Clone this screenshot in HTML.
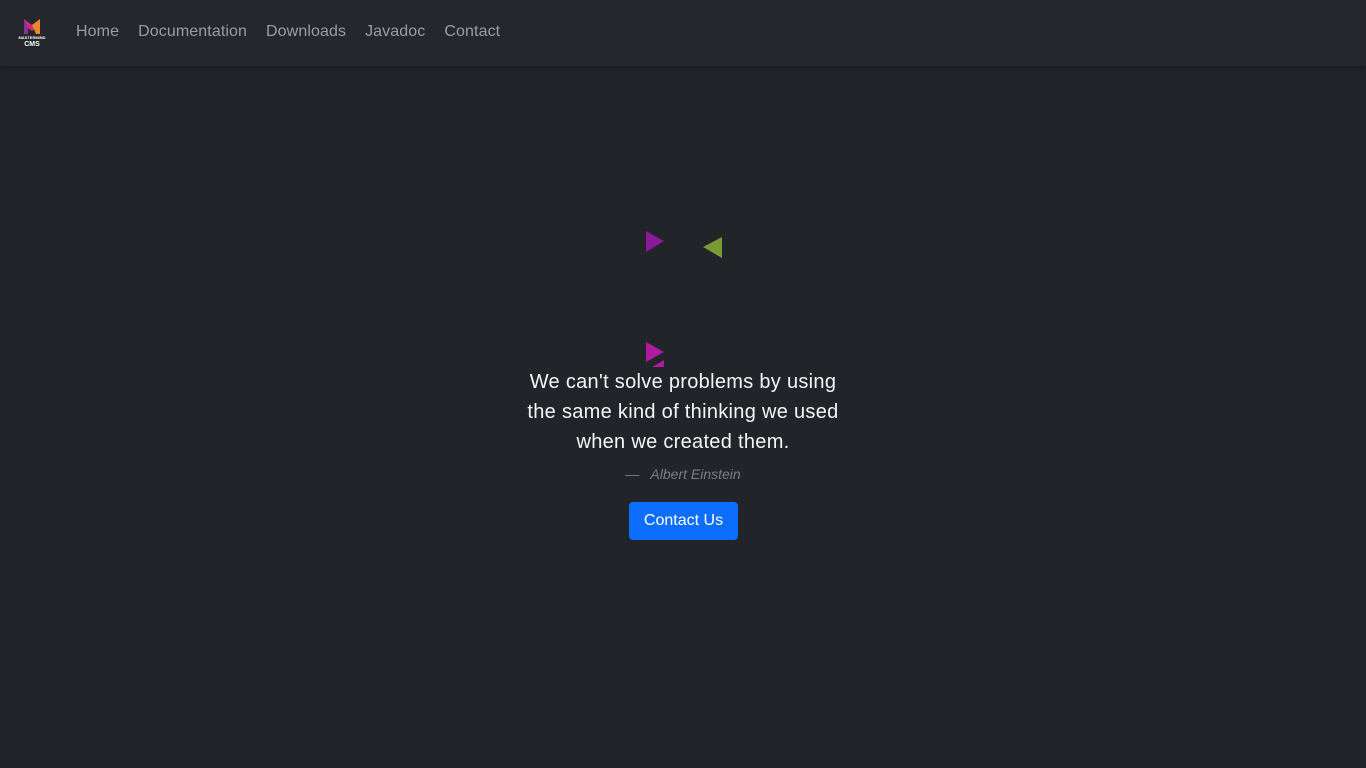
<!DOCTYPE html>
<html><head><meta charset="utf-8"><style>
*{margin:0;padding:0;box-sizing:border-box}
body{width:1366px;height:768px;background:#212529;font-family:"Liberation Sans",sans-serif;overflow:hidden;position:relative}
nav{height:66px;background:#24282c;box-shadow:0 2px 6px rgba(0,0,0,.25);position:relative}
.links{position:absolute;left:76px;top:23px;font-size:16px;color:#9a9da1;letter-spacing:.1px;white-space:nowrap}
.links span{margin-right:19px}
.quote{position:absolute;left:0;width:1366px;top:367px;text-align:center;color:#f4f5f6;font-size:20px;line-height:30px;letter-spacing:.3px}
.auth{position:absolute;top:466px;width:1366px;text-align:center;color:#7b7f84;font-size:14px;font-style:italic}
.btn{position:absolute;left:629px;top:502px;width:109px;height:38px;background:#0d6efd;color:#fff;border-radius:4px;font-size:16px;text-align:center;line-height:38px}
</style></head><body>
<nav>
<svg style="position:absolute;left:14px;top:17px" width="36" height="30" viewBox="0 0 36 30">
<path d="M10 2 L18 8 L26 2 L26 17 L22 17 L22 11 L18 14 L14 11 L14 17 L10 17Z" fill="#d02a7a"/>
<path d="M18 8 L26 2 L26 17 L22 17Z" fill="#e8862a"/>
<path d="M10 2 L14 11 L14 17 L10 17Z" fill="#8a2fa0"/>
<text x="18" y="22" font-size="4" fill="#fff" text-anchor="middle" font-family="Liberation Sans" font-weight="bold">MASTERMIND</text>
<text x="18" y="29" font-size="7" fill="#fff" text-anchor="middle" font-family="Liberation Sans" font-weight="bold">CMS</text>
</svg>
<div class="links"><span>Home</span><span>Documentation</span><span>Downloads</span><span>Javadoc</span><span>Contact</span></div>
</nav>
<svg style="position:absolute;left:640px;top:225px" width="90" height="150">
<polygon points="6,6 24,16 6,27" fill="#8a1a9a"/>
<polygon points="82,12 82,33 63,22" fill="#7a9a36"/>
<polygon points="6,117 24,127 6,137" fill="#b01aa0"/>
<polygon points="12,142 24,135 24,142" fill="#b01aa0"/>
</svg>
<div class="quote">We can't solve problems by using<br>the same kind of thinking we used<br>when we created them.</div>
<div class="auth">—&nbsp;&nbsp; Albert Einstein</div>
<div class="btn">Contact Us</div>
</body></html>
